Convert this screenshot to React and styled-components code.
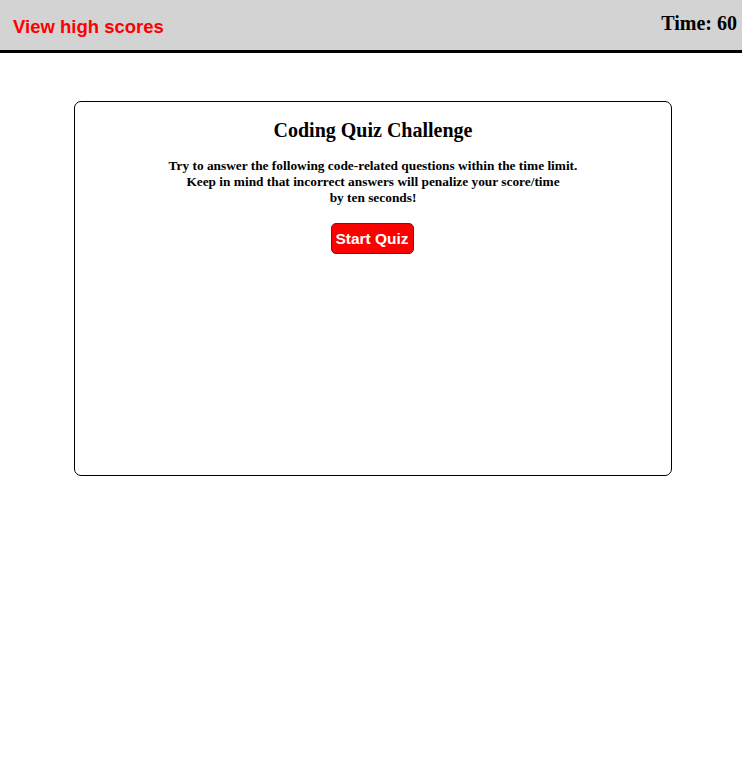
import React from "react";
import styled, { createGlobalStyle } from "styled-components";

const Global = createGlobalStyle`
  html, body { margin: 0; padding: 0; background: #fff; }
  body { font-family: "Liberation Serif", "Times New Roman", serif; }
`;

const Header = styled.header`
  display: flex;
  justify-content: space-between;
  align-items: center;
  height: 50px;
  background: #d3d3d3;
  border-bottom: 3px solid #000;
  padding: 0 5px 0 13px;
`;

const ScoresLink = styled.a`
  font-family: "Liberation Sans", Arial, sans-serif;
  font-weight: bold;
  font-size: 18.5px;
  color: #ff0000;
  text-decoration: none;
  margin-top: 3px;
`;

const Timer = styled.div`
  font-weight: bold;
  font-size: 20px;
  color: #000;
  margin-top: -3px;
`;

const Card = styled.main`
  box-sizing: border-box;
  width: 598px;
  height: 375px;
  margin: 48px 0 0 74px;
  border: 1px solid #000;
  border-radius: 7px;
  display: flex;
  flex-direction: column;
  align-items: center;
  padding-top: 17px;
`;

const Title = styled.h1`
  margin: 0;
  font-size: 20px;
  font-weight: bold;
`;

const Intro = styled.p`
  margin: 16px 0 0;
  font-size: 13.35px;
  font-weight: bold;
  line-height: 16px;
  text-align: center;
  width: 440px;
`;

const StartButton = styled.button`
  margin: 17px 2px 0 0;
  width: 83px;
  height: 31px;
  background: #ff0000;
  color: #fff;
  border: 1px solid #333;
  border-radius: 5px;
  font-family: "Liberation Sans", Arial, sans-serif;
  font-weight: bold;
  font-size: 15.5px;
  padding: 0;
  cursor: pointer;
`;

export default function App() {
  return (
    <>
      <Global />
      <Header>
        <ScoresLink href="#">View high scores</ScoresLink>
        <Timer>Time: 60</Timer>
      </Header>
      <Card>
        <Title>Coding Quiz Challenge</Title>
        <Intro>
          Try to answer the following code-related questions within the time limit.
          <br />
          Keep in mind that incorrect answers will penalize your score/time
          <br />
          by ten seconds!
        </Intro>
        <StartButton>Start Quiz</StartButton>
      </Card>
    </>
  );
}
